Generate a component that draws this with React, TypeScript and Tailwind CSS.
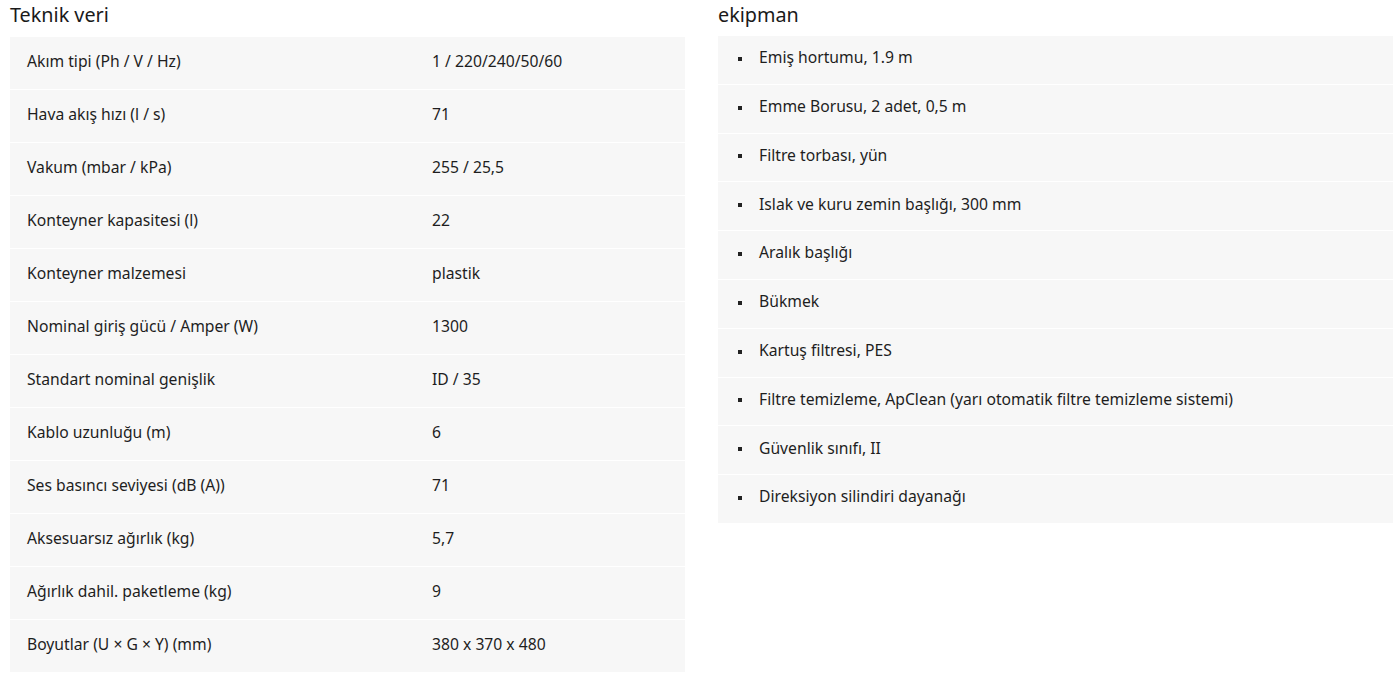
import React from "react";

const specs: [string, string][] = [
  ["Akım tipi (Ph / V / Hz)", "1 / 220/240/50/60"],
  ["Hava akış hızı (l / s)", "71"],
  ["Vakum (mbar / kPa)", "255 / 25,5"],
  ["Konteyner kapasitesi (l)", "22"],
  ["Konteyner malzemesi", "plastik"],
  ["Nominal giriş gücü / Amper (W)", "1300"],
  ["Standart nominal genişlik", "ID / 35"],
  ["Kablo uzunluğu (m)", "6"],
  ["Ses basıncı seviyesi (dB (A))", "71"],
  ["Aksesuarsız ağırlık (kg)", "5,7"],
  ["Ağırlık dahil. paketleme (kg)", "9"],
  ["Boyutlar (U × G × Y) (mm)", "380 x 370 x 480"],
];

const equipment = [
  "Emiş hortumu, 1.9 m",
  "Emme Borusu, 2 adet, 0,5 m",
  "Filtre torbası, yün",
  "Islak ve kuru zemin başlığı, 300 mm",
  "Aralık başlığı",
  "Bükmek",
  "Kartuş filtresi, PES",
  "Filtre temizleme, ApClean (yarı otomatik filtre temizleme sistemi)",
  "Güvenlik sınıfı, II",
  "Direksiyon silindiri dayanağı",
];

export default function App() {
  return (
    <div
      className="w-[1397px] h-[684px] bg-white pl-[10px] text-[#1e1e1e]"
      style={{ fontFamily: '"Noto Sans", "Open Sans", sans-serif' }}
    >
      <div className="grid grid-cols-[675px_675px] gap-x-[33px]">
        <div>
          <h2 className="h-[37px] pt-[1px] text-[19.8px] leading-[28px] text-[#1a1a1a]">Teknik veri</h2>
          <div className="flex flex-col gap-px">
            {specs.map(([k, v]) => (
              <div key={k} className="flex h-[52px] items-center bg-[#f7f7f7] text-[15.7px] pb-[3px]">
                <div className="w-[60%] pl-[17px]">{k}</div>
                <div className="pl-[17px]">{v}</div>
              </div>
            ))}
          </div>
        </div>
        <div>
          <h2 className="h-[36px] pt-[1px] text-[19.8px] leading-[28px] text-[#1a1a1a]">ekipman</h2>
          <ul className="flex flex-col gap-px">
            {equipment.map((e) => (
              <li key={e} className="flex h-[47.8px] items-center bg-[#f7f7f7] text-[15.7px] pl-[20px] pb-[4px]">
                <span className="w-[4px] h-[4px] bg-[#222] mr-[17px] mt-[2px]" />
                <span>{e}</span>
              </li>
            ))}
          </ul>
        </div>
      </div>
    </div>
  );
}
